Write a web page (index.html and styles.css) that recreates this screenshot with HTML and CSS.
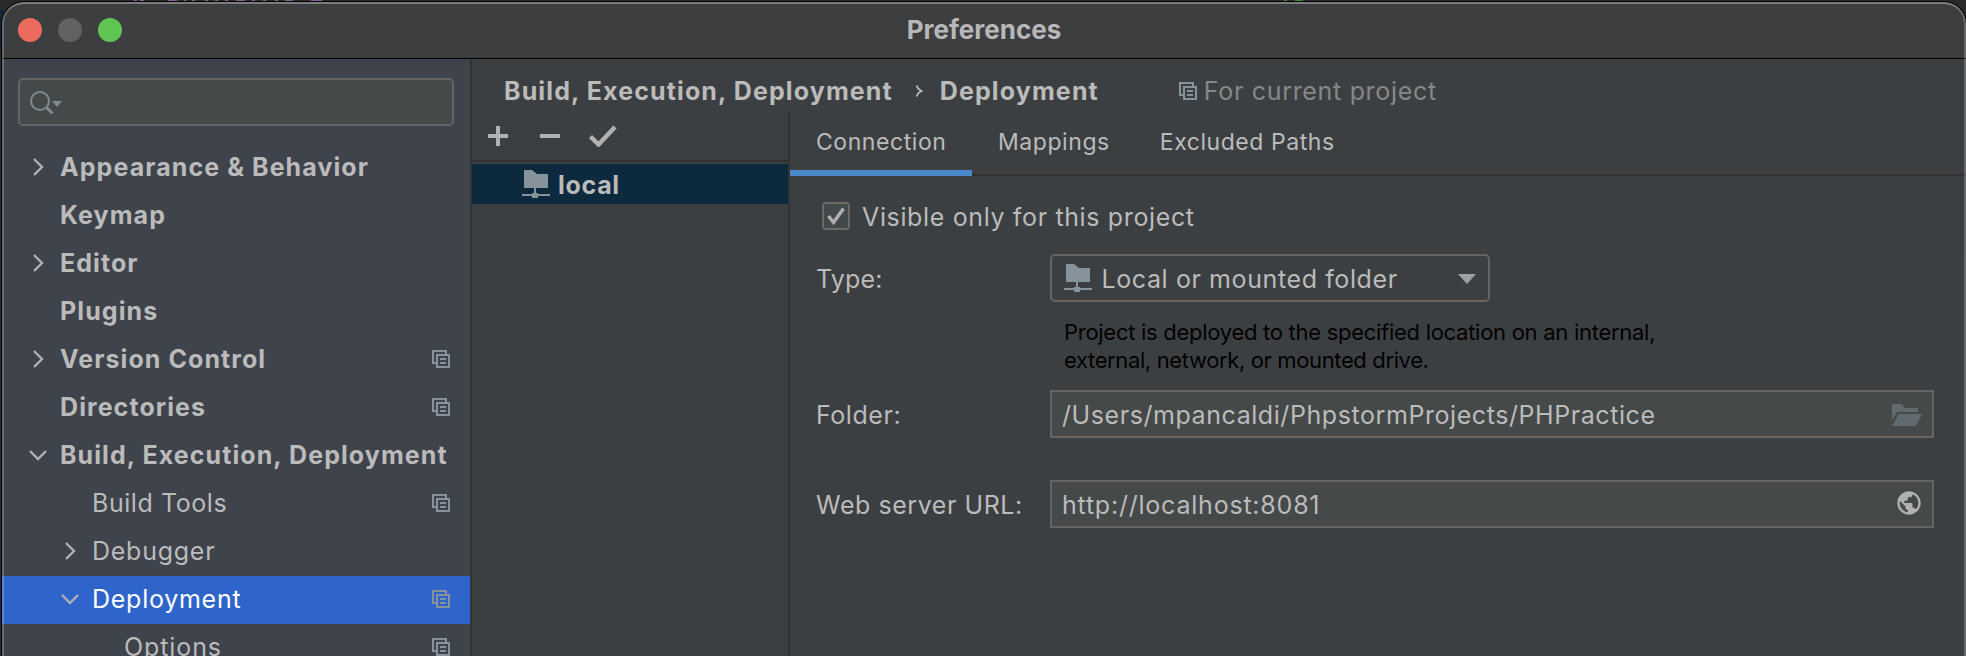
FILE: index.html
```
<!DOCTYPE html>
<html lang="en">
<head>
<meta charset="utf-8">
<title>Preferences</title>
<link rel="stylesheet" href="styles.css">
</head>
<body>
<svg width="0" height="0" class="defs">
  <symbol id="copy" viewBox="0 0 18 18"><path d="M1 14V1h13v3M1 13h3" fill="none" stroke="currentColor" stroke-width="2"/><path d="M5 5h12v12H5zM8 9h6M8 13h6" fill="none" stroke="currentColor" stroke-width="2"/></symbol>
  <symbol id="right" viewBox="0 0 20 20"><path d="M6 2l8 8-8 8" fill="none" stroke="currentColor" stroke-width="2.4"/></symbol>
  <symbol id="down" viewBox="0 0 20 20"><path d="M2 6l8 8 8-8" fill="none" stroke="currentColor" stroke-width="2.4"/></symbol>
  <symbol id="server" viewBox="0 0 28 28"><path d="M2 0h8l5 4h11v14H2zM12 18h2v5h2v1h12v2H16v2h-6v-2H0v-2h10v-1h2z" fill="currentColor"/></symbol>
</svg>
<div class="backdrop">
  <svg class="behind" width="1966" height="60">
    <path d="M0 10h4v40H0z" fill="#0d293e"/>
    <path d="M134 .5h3m3 0h4m24 0h9m7 0h2m6 0h3m10 0h3m7 0h3m7 0h3m8 0h9m7 0h3m8 0h3m9 0h3m7 0h8m18 0h11" stroke="#8a6396"/>
    <path d="M1284 .5h3m8 0h8" stroke="#3c8a3c"/>
  </svg>
  <div class="window">
    <header class="titlebar">
      <div class="lights"><i class="red"></i><i class="gray"></i><i class="green"></i></div>
      <h1>Preferences</h1>
    </header>
    <div class="body">
      <aside class="sidebar">
        <div class="search">
          <svg width="34" height="26" viewBox="0 0 34 26"><circle cx="11" cy="11" r="9" fill="none" stroke="#7d8b94" stroke-width="2"/><path d="M17 17l6.5 6.5" stroke="#7d8b94" stroke-width="3"/><path d="M23 11h10l-5 6z" fill="#7d8b94"/></svg>
        </div>
        <ul class="tree">
          <li><svg class="arrow"><use href="#right"/></svg><b>Appearance &amp; Behavior</b></li>
          <li><span class="arrow"></span><b>Keymap</b></li>
          <li><svg class="arrow"><use href="#right"/></svg><b>Editor</b></li>
          <li><span class="arrow"></span><b>Plugins</b></li>
          <li><svg class="arrow"><use href="#right"/></svg><b>Version Control</b><svg class="copy"><use href="#copy"/></svg></li>
          <li><span class="arrow"></span><b>Directories</b><svg class="copy"><use href="#copy"/></svg></li>
          <li><svg class="arrow"><use href="#down"/></svg><b>Build, Execution, Deployment</b></li>
          <li class="l2 tight"><span class="arrow"></span><span>Build Tools</span><svg class="copy"><use href="#copy"/></svg></li>
          <li class="l2"><svg class="arrow"><use href="#right"/></svg><span>Debugger</span></li>
          <li class="l2 selected"><svg class="arrow"><use href="#down"/></svg><span>Deployment</span><svg class="copy"><use href="#copy"/></svg></li>
          <li class="l3"><span class="arrow"></span><span>Options</span><svg class="copy"><use href="#copy"/></svg></li>
        </ul>
      </aside>
      <main class="main">
        <div class="crumbs">
          <b>Build, Execution, Deployment</b>
          <svg class="sep" width="8" height="14" viewBox="0 0 8 14"><path d="M1.5 1.5c1 2.5 2.500 4.500 5 5.500c-2.500 1-4 3-5 5.500" fill="none" stroke="#bbb" stroke-width="1.800"/></svg>
          <b>Deployment</b>
          <svg class="copy"><use href="#copy"/></svg>
          <span class="scope">For current project</span>
        </div>
        <div class="split">
          <section class="servers">
            <div class="toolbar">
              <svg width="20" height="20"><path d="M0 10h20M10 0v20" stroke="#afb1b3" stroke-width="4"/></svg>
              <svg width="20" height="20"><path d="M0 10h20" stroke="#afb1b3" stroke-width="4"/></svg>
              <svg class="apply" width="28" height="22"><path d="M1.500 11.500l8 8L26 2" fill="none" stroke="#afb1b3" stroke-width="4.500"/></svg>
            </div>
            <div class="server"><svg class="srv"><use href="#server"/></svg><b>local</b></div>
          </section>
          <section class="detail">
            <nav class="tabs"><span class="tab active">Connection</span><span class="tab">Mappings</span><span class="tab">Excluded Paths</span></nav>
            <div class="form">
              <label class="check"><span class="box"><svg width="24" height="24"><path d="M4.500 12l5 6.500L19.500 4.500" fill="none" stroke="#b0b0b0" stroke-width="3.400"/></svg></span>Visible only for this project</label>
              <div class="row type"><span class="name">Type:</span>
                <div class="combo"><svg class="srv"><use href="#server"/></svg><span>Local or mounted folder</span><svg class="drop" width="18" height="10"><path d="M0 0h18l-9 10z" fill="#9da0a3"/></svg></div>
              </div>
              <p class="help">Project is deployed to the specified location on an internal,<br><span>external, network, or mounted drive.</span></p>
              <div class="row"><span class="name">Folder:</span>
                <div class="field"><span>/Users/mpancaldi/PhpstormProjects/PHPractice</span><svg class="open" width="30" height="22"><path d="M0 0h10l2.500 4H26v4H5L0 17z" fill="#616a6e"/><path d="M6.500 10H30l-6 12H0z" fill="#616a6e"/></svg></div>
              </div>
              <div class="row url"><span class="name">Web server URL:</span>
                <div class="field"><span>http://localhost:8081</span><svg class="globe" width="24" height="24" viewBox="1.700 1.700 20.600 20.600"><path d="M12 2C6.480 2 2 6.480 2 12s4.480 10 10 10 10-4.480 10-10S17.520 2 12 2zm-1 17.930c-3.950-.49-7-3.850-7-7.930 0-.62.080-1.210.210-1.790L9 15v1c0 1.100.9 2 2 2v1.930zm6.900-2.540c-.26-.81-1-1.390-1.900-1.390h-1v-3c0-.55-.45-1-1-1H8v-2h2c.55 0 1-.45 1-1V7h2c1.100 0 2-.9 2-2v-.41c2.930 1.190 5 4.060 5 7.410 0 2.080-.8 3.970-2.100 5.390z" fill="#afb1b3"/></svg></div>
              </div>
            </div>
          </section>
        </div>
      </main>
    </div>
  </div>
</div>
</body>
</html>
```
FILE: styles.css
```
* { box-sizing: border-box; }
body { margin: 0; background: #2b2b2b; color: #bbb; font: 25px/48px Inter, "Liberation Sans", sans-serif; letter-spacing: .68px; overflow: hidden; }
h1, p, ul { margin: 0; padding: 0; }
svg { display: block; flex: none; }
b { font-weight: 700; letter-spacing: 1.08px; }
.defs { position: absolute; }
.backdrop { height: 656px; padding: 2px 0 0 2px; position: relative; overflow: hidden; }
.behind { position: absolute; left: 0; top: 0; }
.window { position: relative; width: 1964px; height: 700px; display: flex; flex-direction: column; background: #3c3f41; border-radius: 22px; box-shadow: 0 0 0 1px #000; overflow: hidden; white-space: nowrap; }
/* translucent edge highlight over the window */
.window::after { content: ""; position: absolute; inset: 0; border: 2px solid rgba(255,255,255,.22); border-top-color: rgba(255,255,255,.32); border-radius: 22px; pointer-events: none; }
.titlebar { height: 57px; flex: none; border-bottom: 1px solid #000; background: #3d3e3f; display: grid; grid-template-columns: 1fr auto 1fr; }
.lights { display: flex; gap: 16px; padding: 16px 0 0 16px; }
.lights i { width: 24px; height: 24px; border-radius: 50%; }
.red { background: #ed6a5e; }
.gray { background: #616264; }
.green { background: #61c554; }
h1 { font-size: 26px; line-height: 56px; letter-spacing: 0; font-weight: 700; color: #b7b7b9; }
.body { flex: 1; display: flex; min-height: 0; }
.sidebar { width: 470px; flex: none; background: #3f434c; border-right: 2px solid #323232; padding-top: 19px; }
.search { margin: 0 0 0 16px; width: 436px; height: 48px; border: 2px solid #646464; border-radius: 5px; background: #45494a; padding: 10px 0 0 9px; }
.tree { list-style: none; margin-top: 18px; }
.tree li { height: 48px; line-height: 46px; padding-left: 25px; display: flex; align-items: flex-start; }
.tree li.l2 { padding-left: 57px; letter-spacing: .74px; }
.tree li.tight { letter-spacing: .56px; }
.tree li.l3 { padding-left: 89px; letter-spacing: .9px; }
.tree .arrow { width: 20px; height: 20px; margin: 13px 12px 0 1px; color: #afb1b3; }
.tree .copy { margin: 14px 20px 0 auto; }
.copy { width: 18px; height: 18px; color: #87939a; }
.tree .selected { background: #2f65ca; color: #fff; }
.main { flex: 1; min-width: 0; display: flex; flex-direction: column; }
.crumbs { height: 53px; flex: none; display: flex; line-height: 64px; padding-left: 32px; }
.crumbs .sep { margin: 25px 17px 0 22px; }
.crumbs .copy { margin: 23px 7px 0 80px; }
.crumbs b { letter-spacing: 1.12px; }
.scope { color: #878787; font-weight: 400; }
.split { flex: 1; display: flex; min-height: 0; }
.servers { width: 318px; flex: none; border-right: 2px solid #323232; }
.toolbar { height: 50px; border-bottom: 2px solid #323232; display: flex; gap: 32px; padding: 14px 0 0 16px; }
.apply { margin: -1px 0 0 -3px; }
.server { margin-top: 2px; height: 40px; background: #0d293e; display: flex; line-height: 43px; padding-left: 50px; }
.server b { letter-spacing: .7px; }
.srv { width: 28px; height: 28px; margin: 6px 8px 0 0; color: #87939a; }
.detail { flex: 1; min-width: 0; }
.tabs { display: flex; height: 64px; border-bottom: 2px solid #323232; font-size: 23px; line-height: 60px; letter-spacing: .56px; }
.tab { padding: 0 24px 0 26px; height: 64px; }
.tab.active { width: 182px; border-bottom: 6px solid #4a88c7; }
.form { padding: 26px 32px 0 27px; }
.check { display: flex; line-height: 31px; height: 28px; padding-left: 5px; letter-spacing: .64px; }
.box { width: 28px; height: 28px; border: 2px solid #6b6b6b; border-radius: 4px; background: #43494a; margin-right: 12px; }
.row { display: grid; grid-template-columns: 233px 1fr; grid-template-rows: 48px; height: 48px; line-height: 50px; }
.type { margin-top: 24px; }
.name { letter-spacing: .55px; margin-left: -1px; }
.type .name { letter-spacing: .2px; }
.combo { width: 440px; height: 48px; border: 2px solid #646464; border-radius: 5px; display: flex; line-height: 46px; padding-left: 12px; }
.combo .srv { margin: 8px 9.500px 0 0; }
.combo span { letter-spacing: .6px; }
.drop { margin: 18px 12px 0 auto; }
.help { height: 56px; margin: 16px 0 0 247px; color: #000; font-size: 22px; line-height: 28px; letter-spacing: -.28px; }
.help span { letter-spacing: -.37px; }
.help + .row { margin-top: 16px; }
.field { border: 2px solid #646464; background: #45494a; display: flex; line-height: 46px; padding-left: 10px; }
.field span { letter-spacing: .57px; }
.open { margin: 12px 10px 0 auto; }
.url { margin-top: 42px; }
.url .field span { letter-spacing: .78px; }
.globe { margin: 9px 11px 0 auto; }
```
